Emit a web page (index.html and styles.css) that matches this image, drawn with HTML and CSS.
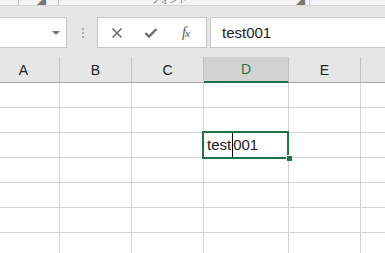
FILE: index.html
```html
<!DOCTYPE html>
<html>
<head>
    <title>Sheet</title>
    <link rel="stylesheet" href="styles.css">
</head>
<body>
    <!-- ribbon group labels, only the bottom edge is visible -->
    <div class="ribbon">
        <span class="group-label first">クリップボード</span>
        <span class="group-sep"></span>
        <span class="launcher">◢</span>
        <span class="group-sep"></span>
        <span class="group-label mid">フォント</span>
        <span class="launcher right">◢</span>
        <span class="group-sep last"></span>
    </div>

    <div class="formula-bar">
        <div class="name-box"><span class="drop"></span></div>
        <div class="grip"><i></i><i></i><i></i></div>
        <div class="fx-box">
            <svg class="btn-x" width="12" height="12" viewBox="0 0 12 12">
                <path d="M1.5 1.5 L10.5 10.5 M10.5 1.5 L1.5 10.5" stroke="#6b6b6b" stroke-width="1.5" fill="none"/>
            </svg>
            <svg class="btn-ok" width="14" height="12" viewBox="0 0 14 12">
                <path d="M1.5 6 L5 9.5 L12.5 2" stroke="#6b6b6b" stroke-width="2.4" fill="none"/>
            </svg>
            <span class="fx">f<sub>x</sub></span>
        </div>
        <div class="formula-input">test001</div>
    </div>

    <div class="sheet">
        <div class="head">A</div>
        <div class="head">B</div>
        <div class="head">C</div>
        <div class="head active">D</div>
        <div class="head">E</div>
        <div class="head"></div>

        <div class="cell"></div><div class="cell"></div><div class="cell"></div><div class="cell"></div><div class="cell"></div><div class="cell"></div>
        <div class="cell"></div><div class="cell"></div><div class="cell"></div><div class="cell"></div><div class="cell"></div><div class="cell"></div>
        <div class="cell"></div><div class="cell"></div><div class="cell"></div>
        <div class="cell selected"><span>test</span><span class="caret"></span><span>001</span></div>
        <div class="cell"></div><div class="cell"></div>
        <div class="cell"></div><div class="cell"></div><div class="cell"></div><div class="cell"></div><div class="cell"></div><div class="cell"></div>
        <div class="cell"></div><div class="cell"></div><div class="cell"></div><div class="cell"></div><div class="cell"></div><div class="cell"></div>
        <div class="cell"></div><div class="cell"></div><div class="cell"></div><div class="cell"></div><div class="cell"></div><div class="cell"></div>
        <div class="cell"></div><div class="cell"></div><div class="cell"></div><div class="cell"></div><div class="cell"></div><div class="cell"></div>
    </div>
</body>
</html>
```

FILE: styles.css
```css
body {
    margin: 0;
    width: 385px;
    height: 253px;
    overflow: hidden;
    background: #ffffff;
    font-family: "Liberation Sans", Arial, "Noto Sans CJK JP", sans-serif;
}

/* ribbon strip */
.ribbon {
    height: 5px;
    background: #f3f3f3;
    border-bottom: 1px solid #d6d6d6;
    overflow: hidden;
    display: flex;
    align-items: flex-start;
    color: #777;
    font-size: 12px;
    line-height: 12px;
}

.group-label {
    margin-top: -8px;
    white-space: nowrap;
}

.group-label.first {
    margin-left: -78px;
}

.group-label.mid {
    margin-left: 92px;
    font-size: 9px;
    margin-top: -6px;
}

.group-sep {
    width: 1px;
    height: 5px;
    background: #c8c8c8;
    margin-left: 12px;
}

.group-sep.last {
    margin-left: 4px;
}

.launcher {
    font-size: 9px;
    margin-top: -5px;
    margin-left: 18px;
}

.launcher.right {
    margin-left: 109px;
}

/* formula bar */
.formula-bar {
    display: flex;
    align-items: center;
    background: #e6e6e6;
    padding: 11px 0 9px;
}

.name-box,
.fx-box,
.formula-input {
    height: 29px;
    background: #ffffff;
    border: 1px solid #c6c6c6;
}

.name-box {
    width: 76px;
    margin-left: -11px;
    position: relative;
}

.drop {
    position: absolute;
    right: 6px;
    top: 13px;
    border-left: 4px solid transparent;
    border-right: 4px solid transparent;
    border-top: 4px solid #777;
}

.grip {
    display: flex;
    flex-direction: column;
    gap: 2px;
    margin-left: 15px;
    margin-right: 13px;
}

.grip i {
    width: 2px;
    height: 2px;
    background: #ababab;
}

.fx-box {
    width: 108px;
    display: flex;
    align-items: center;
}

.btn-x {
    margin-left: 13px;
}

.btn-ok {
    margin-left: 21px;
}

.fx {
    margin-left: 24px;
    font-family: "Liberation Serif", serif;
    font-style: italic;
    font-size: 14px;
    color: #555;
}

.fx sub {
    font-size: 11px;
    vertical-align: 0;
    margin-left: -1px;
}

.formula-input {
    flex: 1;
    margin-left: 3px;
    margin-right: -10px;
    display: flex;
    align-items: center;
    padding-left: 11px;
    font-size: 15px;
    color: #222;
}

/* sheet grid */
.sheet {
    display: grid;
    grid-template-columns: 72px 72px 72px 85px 72px 72px;
    grid-auto-rows: 25px;
    grid-template-rows: 26px;
    margin-left: -12px;
}

.head {
    background: #e6e6e6;
    border-right: 1px solid #c2c2c2;
    border-bottom: 1px solid #a6a6a6;
    display: flex;
    align-items: center;
    justify-content: center;
    font-size: 14px;
    color: #222;
}

.head.active {
    background: #d2d2d2;
    color: #217346;
    border-bottom: 2px solid #217346;
}

.cell {
    border-right: 1px solid #d4d4d4;
    border-bottom: 1px solid #d4d4d4;
}

.cell.selected {
    position: relative;
    display: flex;
    align-items: center;
    padding-left: 3px;
    padding-bottom: 1px;
    font-size: 15px;
    color: #222;
}

.cell.selected::before {
    content: '';
    position: absolute;
    left: -2px;
    top: -2px;
    right: -1px;
    bottom: -2px;
    border: 2px solid #217346;
}

.cell.selected::after {
    content: '';
    position: absolute;
    right: -4px;
    bottom: -4px;
    width: 5px;
    height: 5px;
    background: #217346;
    border-left: 1px solid #fff;
    border-top: 1px solid #fff;
}

.caret {
    width: 1px;
    height: 24px;
    margin-left: 1px;
    background: #000;
}
```
